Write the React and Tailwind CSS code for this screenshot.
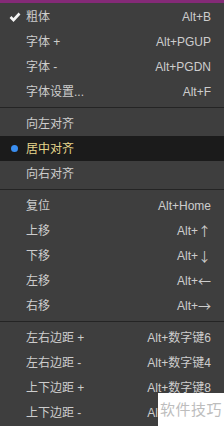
import React from "react";

const groups = [
  [
    { label: "粗体", key: "Alt+B", mark: "check" },
    { label: "字体 +", key: "Alt+PGUP" },
    { label: "字体 -", key: "Alt+PGDN" },
    { label: "字体设置...", key: "Alt+F" },
  ],
  [
    { label: "向左对齐" },
    { label: "居中对齐", mark: "dot", active: true },
    { label: "向右对齐" },
  ],
  [
    { label: "复位", key: "Alt+Home" },
    { label: "上移", key: "Alt+", arrow: "↑" },
    { label: "下移", key: "Alt+", arrow: "↓" },
    { label: "左移", key: "Alt+", arrow: "←" },
    { label: "右移", key: "Alt+", arrow: "→" },
  ],
  [
    { label: "左右边距 +", key: "Alt+数字键6" },
    { label: "左右边距 -", key: "Alt+数字键4" },
    { label: "上下边距 +", key: "Alt+数字键8" },
    { label: "上下边距 -", key: "Alt+数字键2" },
  ],
];

function Mark({ type }) {
  if (type === "check") {
    return (
      <svg width="12" height="10" viewBox="0 0 12 10" className="ml-[3px]">
        <path d="M1.5 5 L4.5 8 L10.5 1.5" fill="none" stroke="#f4f4f4" strokeWidth="2.6" />
      </svg>
    );
  }
  if (type === "dot") {
    return <span className="block w-[7px] h-[7px] rounded-full bg-[#3a8ef0] ml-[2px]" />;
  }
  return null;
}

function Row({ item }) {
  return (
    <div
      className={`h-[25px] flex items-center pr-[13px] ${item.active ? "bg-[#1b1b1b]" : ""}`}
    >
      <div className="w-[26px] flex items-center justify-center pl-[1px]">
        <Mark type={item.mark} />
      </div>
      <span className={`flex-1 ${item.active ? "text-[#e6d68c]" : "text-[#cdcdcd]"}`}>
        {item.label}
      </span>
      {item.key && (
        <span className="text-[#cdcdcd] flex items-center">
          {item.key}
          {item.arrow && (
            <span
              className="text-[13px]"
              style={{ fontFamily: '"Noto Sans CJK SC", sans-serif' }}
            >
              {item.arrow}
            </span>
          )}
        </span>
      )}
    </div>
  );
}

export default function App() {
  return (
    <div
      className="relative w-[224px] h-[426px] overflow-hidden bg-[#3e3e3e] text-[12px] leading-none"
      style={{ fontFamily: '"Liberation Sans", "Noto Sans CJK SC", sans-serif' }}
    >
      <div className="h-[3px] bg-[#842a77]" />
      <div className="h-[1px]" />
      {groups.map((g, i) => (
        <div key={i}>
          {i > 0 && (
            <div className="py-[3px]">
              <div className="h-[1px] bg-[#242424]" />
            </div>
          )}
          {g.map((item) => (
            <Row key={item.label} item={item} />
          ))}
        </div>
      ))}

      {/* watermark */}
      <div className="absolute left-[158px] top-[393px] w-[66px] h-[33px] bg-white flex items-center justify-center">
        <span className="text-[15px] text-[#bdbdbd] tracking-[0.5px]">软件技巧</span>
      </div>
    </div>
  );
}
